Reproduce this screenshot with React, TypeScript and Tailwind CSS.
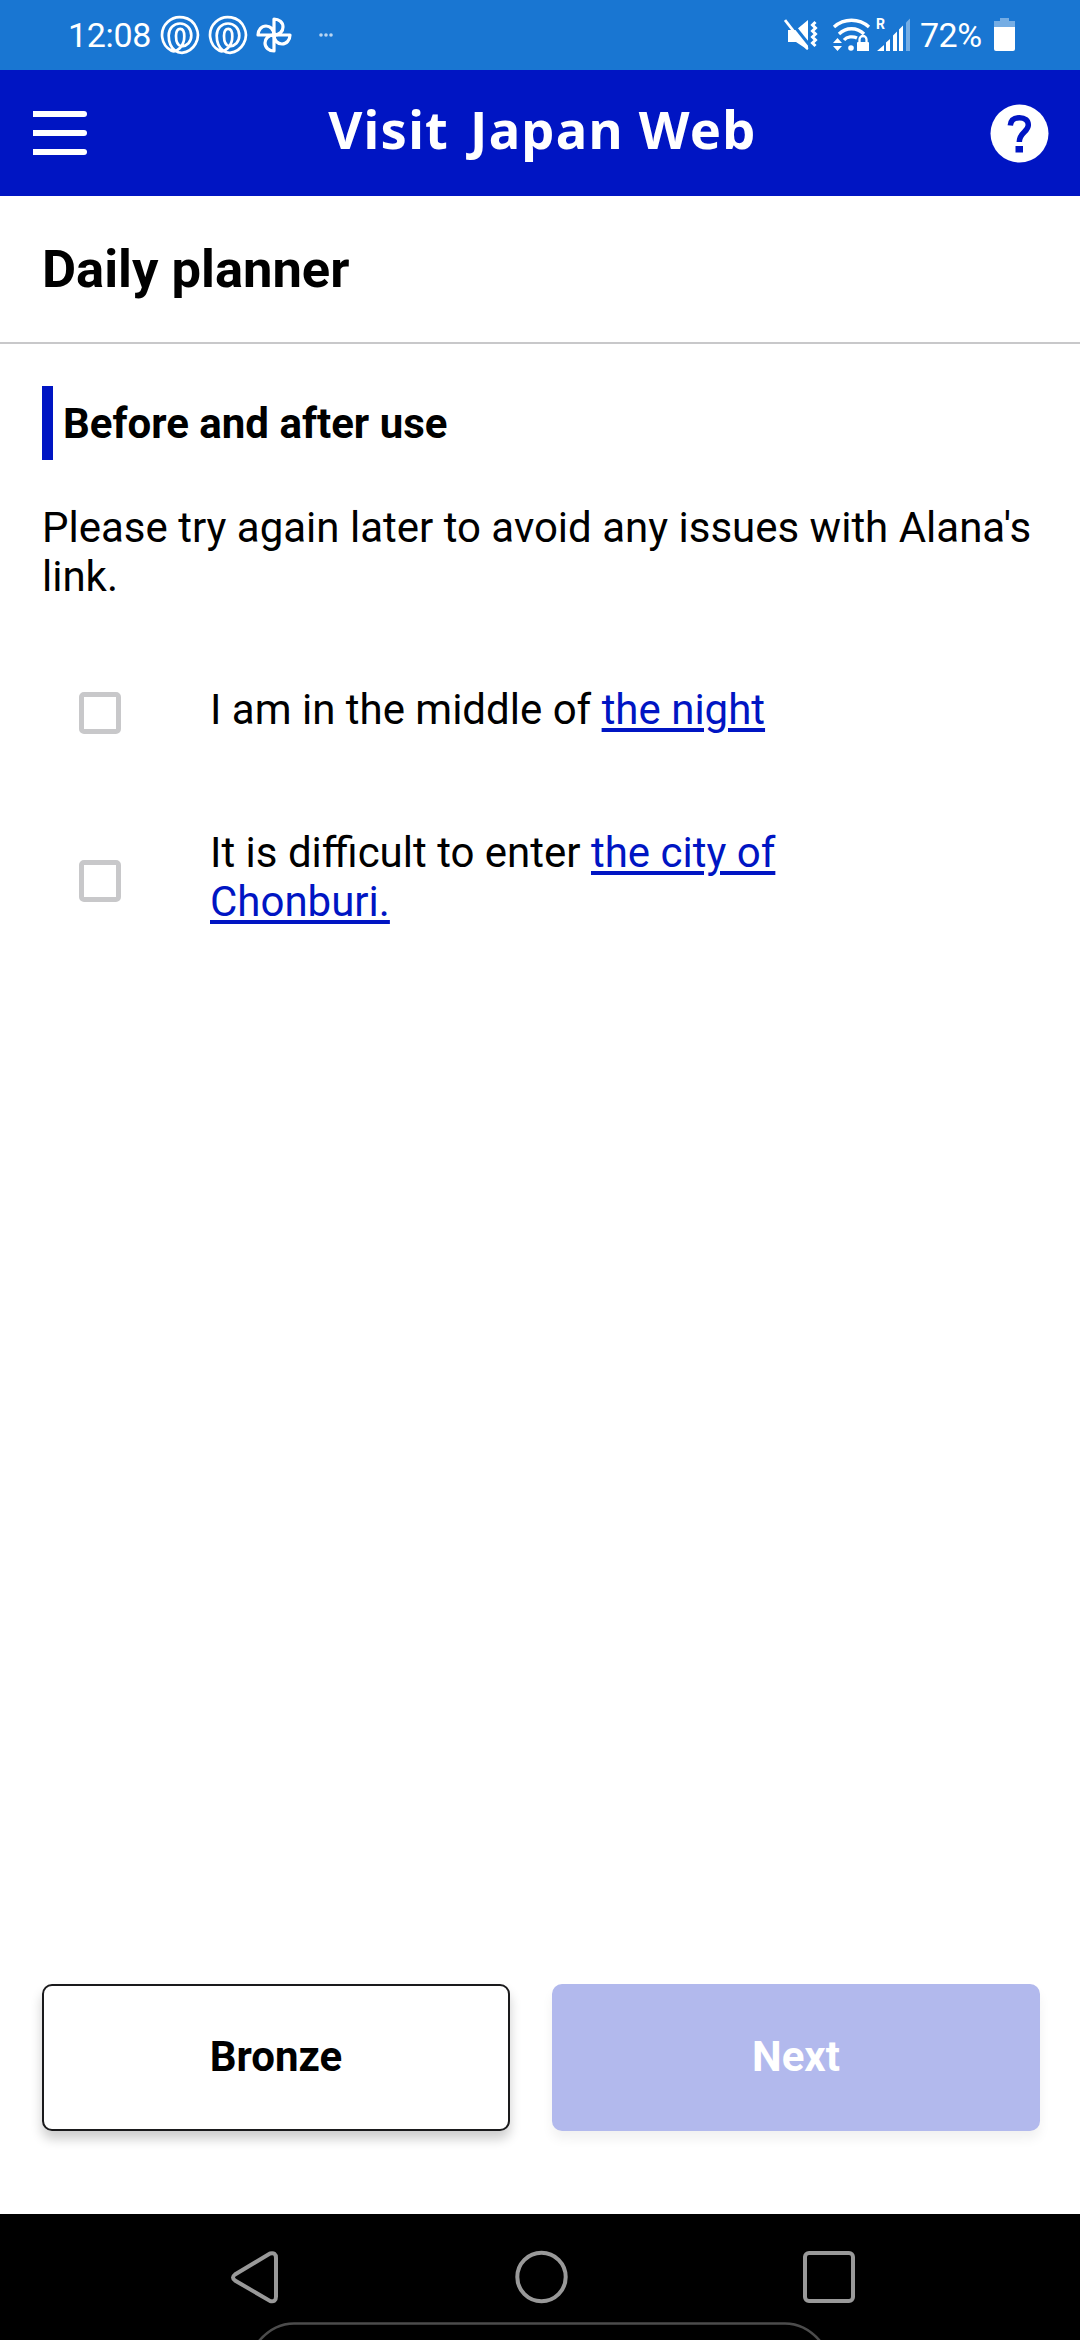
import React from "react";

const StatusBar: React.FC = () => {
  return (
    <div className="flex h-[70px] items-center bg-[#1976d2] pl-[68px] pr-[65px] text-[34px] leading-[40px] text-white">
      <span className="w-[92px] tracking-[-0.3px]">12:08</span>
      <SpiralIcon />
      <SpiralIcon />
      <PinwheelIcon />
      <svg className="ml-[26px]" width="16" height="40" viewBox="0 0 16 40" fill="#b9d5f1">
        <circle cx="3" cy="20" r="1.8" />
        <circle cx="8" cy="20" r="1.8" />
        <circle cx="13" cy="20" r="1.8" />
      </svg>
      <div className="flex-1" />
      <MuteIcon />
      <WifiIcon />
      <SignalIcon />
      <span className="ml-[9px] w-[74px] tracking-[-0.5px]">72%</span>
      <svg width="21" height="34" viewBox="0 0 21 34">
        <path d="M6 0h9v3h6v6H0V3h6z" fill="#75ade4" />
        <path d="M0 9h21v22a2 2 0 0 1-2 2H2a2 2 0 0 1-2-2z" fill="#fff" />
      </svg>
    </div>
  );
};

const SpiralIcon = () => (
  <svg className="mr-[8px]" width="40" height="40" viewBox="0 0 40 40" fill="none" stroke="#fff" strokeWidth="2.7">
    <path d="M15 35.500C17 37.200 19.500 37.800 22 37.800A17.900 17.900 0 1 0 11.500 35.800C17 38 24.300 31 24.300 21.500C24.300 16.500 23 13.800 20.300 13.800C17.500 13.800 16 16.500 16 21C16 26 17.500 30.500 21.500 31.500C27 31 31.300 27 31.300 20.500C31.300 13.500 26.500 8.500 20 8.500C13.500 8.500 8.700 13.500 8.700 20.500C8.700 27 11 32.500 15 35.500" />
  </svg>
);

const PinwheelIcon = () => (
  <svg width="36" height="36" viewBox="0 0 36 36" fill="none" stroke="#fff" strokeWidth="3.200" strokeLinejoin="round">
    <path d="M18 18V2C23 2 27 5.500 27 10C27 14 24 18 18 18z" />
    <path d="M18 18H34C34 23 30.500 27 26 27C22 27 18 24 18 18z" />
    <path d="M18 18V34C13 34 9 30.500 9 26C9 22 12 18 18 18z" />
    <path d="M18 18H2C2 13 5.500 9 10 9C14 9 18 12 18 18z" />
  </svg>
);

const MuteIcon = () => (
  <svg width="34" height="34" viewBox="0 0 34 34">
    <path d="M4 12h8L24 2v30L12 24H4z" fill="#fff" />
    <path d="M3 -1L27 29" stroke="#1976d2" strokeWidth="3" />
    <path d="M1 2L23.500 31" stroke="#fff" strokeWidth="2.800" />
    <path d="M31.500 4l-3 3 3 3-3 3 3 3-3 3 3 3-3 3 3 3" fill="none" stroke="#fff" strokeWidth="3" />
  </svg>
);

const WifiIcon = () => (
  <svg className="ml-[14px]" width="39" height="34" viewBox="0 0 39 34" fill="none" stroke="#fff" strokeWidth="3.300">
    <path d="M2 9C12 0 27 0 37 9" />
    <path d="M7 16C14 9 25 9 32 16" />
    <path d="M12 22C15 18.500 21 18 25 20" />
    <circle cx="19" cy="30" r="2.800" fill="#fff" stroke="none" />
    <path d="M1 25l4.500-5 4.500 5zM1 28l4.500 5 4.500-5z" fill="#fff" stroke="none" />
    <path d="M27.500 25v-3.500a3.500 3.500 0 0 1 7 0V25" strokeWidth="2.300" />
    <path d="M26 24h10a1 1 0 0 1 1 1v8H25v-8a1 1 0 0 1 1-1z" fill="#fff" stroke="none" />
  </svg>
);

const SignalIcon = () => (
  <div className="relative ml-[6px] h-[34px] w-[34px]">
    <span className="absolute -left-px -top-px text-[14px] font-bold leading-[14px]">R</span>
    <svg width="34" height="34" viewBox="0 0 34 34" fill="#fff">
      <path d="M0 33l7-6v6zM9 24.500l4-3.500v12H9zM16 17.500l4-4V33h-4zM22 11.500l4-4V33h-4z" />
      <path d="M29 4.500l4-4V33h-4z" fill="#75ade4" />
    </svg>
  </div>
);

const Header: React.FC = () => {
  return (
    <header className="flex h-[126px] items-center justify-between bg-[#0015c3] pl-[33px] pr-[31px]">
      <button className="flex w-[54px] flex-col gap-[13px]" aria-label="Menu">
        <span className="h-[6px] rounded-r-full bg-white" />
        <span className="h-[6px] rounded-r-full bg-white" />
        <span className="h-[6px] rounded-r-full bg-white" />
      </button>
      <h1 className="-mt-[8px] ml-[8px] whitespace-nowrap font-['Noto_Sans',sans-serif] text-[52.5px] font-bold leading-[72px] tracking-[1.250px] text-white">
        <span className="mr-[6px]">Visit</span> Japan Web
      </h1>
      <svg width="59" height="59" viewBox="0 0 59 59">
        <circle cx="29.500" cy="29.500" r="29" fill="#fff" />
        <path d="M20.300 21.500C20.800 16 24.500 13.700 29.500 13.700C35 13.700 38.300 16.500 38.300 21C38.300 28 29.300 28.500 29.300 38" fill="none" stroke="#0015c3" strokeWidth="5.500" />
        <path d="M25.500 42h7.500v6.500h-7.500z" fill="#0015c3" />
      </svg>
    </header>
  );
};

const checkItems = [
  { text: "I am in the middle of ", link: "the night", box: "mt-[7px]" },
  { text: "It is difficult to enter ", link: "the city of Chonburi.", box: "mt-[32px]" },
];

const NavBar: React.FC = () => {
  return (
    <nav className="h-[126px] bg-black">
      <svg width="1080" height="126" viewBox="0 0 1080 126" fill="none" stroke="#999" strokeWidth="4">
        <path d="M270 39.500L235 60.500Q231 63.500 235 66.500L270 87Q276 88.500 276 82.500V44Q276 38 270 39.500z" />
        <circle cx="541.500" cy="63" r="24.200" />
        <rect x="805" y="39" width="48" height="48" rx="4" />
        <path d="M259 127Q274 109.500 294 109.500H785Q805 109.500 820 127" stroke="#4c4c4c" strokeWidth="2.500" />
      </svg>
    </nav>
  );
};

export default function App() {
  return (
    <div className="flex h-[2340px] w-[1080px] flex-col bg-white font-[Roboto,sans-serif] text-[42px] leading-[49px] text-black">
      <StatusBar />
      <Header />
      <h2 className="h-[148px] border-b-2 border-[#c8c8ca] px-[42px] pt-[42px] text-[52.5px] font-bold leading-[62px]">
        Daily planner
      </h2>
      <main className="flex-1 px-[42px] pt-[42px]">
        <h3 className="flex h-[74px] items-center border-l-[11px] border-[#0015c3] pl-[10px] font-bold">
          Before and after use
        </h3>
        <p className="mt-[43px]">Please try again later to avoid any issues with Alana's link.</p>
        <ul className="mt-[84px] flex flex-col gap-[94px] pl-[37px]">
          {checkItems.map((item) => (
            <li key={item.link} className="flex items-start">
              <span className={`size-[42px] shrink-0 rounded-[5px] border-[5px] border-[#c8c8ca] ${item.box}`} />
              <p className="ml-[89px] w-[700px]">
                {item.text}
                <a className="text-[#0015c3] underline decoration-[4px] underline-offset-[4px]">{item.link}</a>
              </p>
            </li>
          ))}
        </ul>
      </main>
      <div className="flex gap-[42px] pb-[83px] pl-[42px] pr-[40px] font-bold">
        <button className="h-[147px] w-[468px] rounded-[10px] border-2 border-[#1a1a1c] bg-white pb-[2px] shadow-[0_8px_12px_rgba(0,0,0,0.2)]">
          Bronze
        </button>
        <button className="h-[147px] w-[488px] rounded-[10px] bg-[#b2b9ed] pb-[2px] text-white shadow-[0_8px_12px_rgba(0,0,0,0.06)]">
          Next
        </button>
      </div>
      <NavBar />
    </div>
  );
}
